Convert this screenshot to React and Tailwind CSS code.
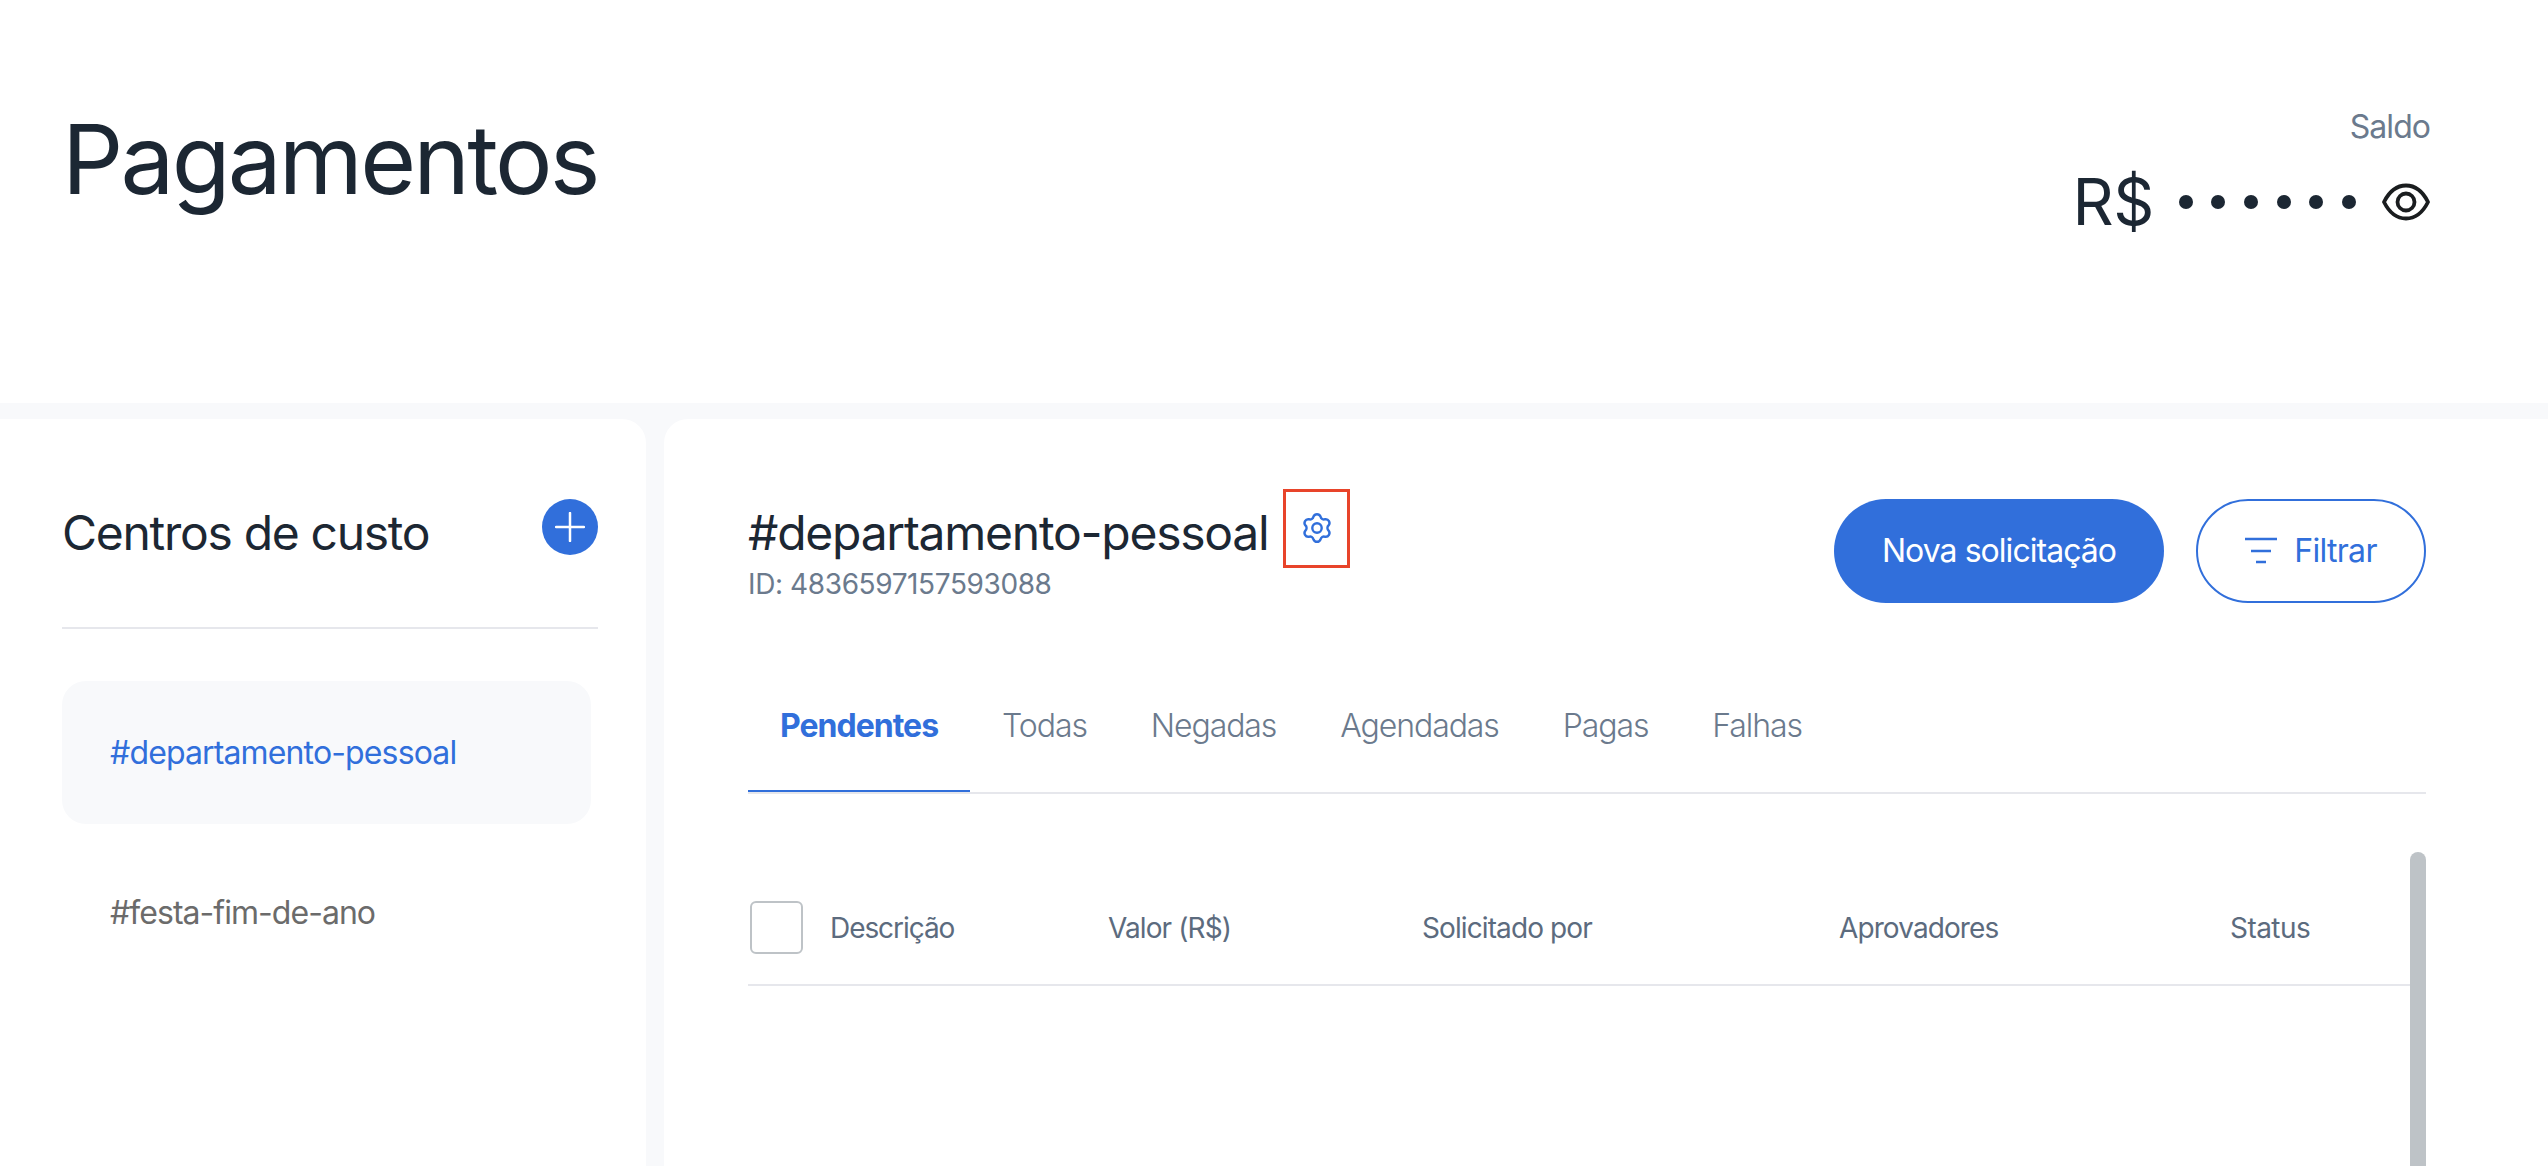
const tabs = ["Todas", "Negadas", "Agendadas", "Pagas", "Falhas"];

// six round lobes around the centre of a 32x32 box
function gearPath() {
  const pt = (deg) => {
    const r = (deg * Math.PI) / 180;
    return `${(16 + 12 * Math.cos(r)).toFixed(2)} ${(16 + 12 * Math.sin(r)).toFixed(2)}`;
  };
  let d = `M${pt(-90 - 17)}`;
  for (let i = 0; i < 6; i++) {
    const a = -90 + 60 * i;
    d += `A3.8 3.8 0 0 1 ${pt(a + 17)}A3.5 3.5 0 0 0 ${pt(a + 60 - 17)}`;
  }
  return d + "Z";
}

function EyeIcon() {
  return (
    <svg width="48" height="38" viewBox="0 0 48 38" fill="none" stroke="#1a1d1f" strokeWidth="3.8">
      <path d="M2 19C7 9 14 2.500 24 2.500S41 9 46 19C41 29 34 35.500 24 35.500S7 29 2 19Z" strokeLinejoin="round" />
      <circle cx="24" cy="19" r="8.500" />
    </svg>
  );
}

function GearIcon() {
  return (
    <svg width="32" height="32" viewBox="0 0 32 32" fill="none" stroke="#316fdb" strokeWidth="2.400" strokeLinejoin="round">
      <path d={gearPath()} />
      <circle cx="16" cy="16" r="4.700" />
    </svg>
  );
}

export default function App() {
  return (
    <div className="h-screen overflow-hidden flex flex-col bg-[#f8f9fb] font-['Inter',sans-serif] text-[#1c2733]">
      {/* Header */}
      <header className="h-[403px] shrink-0 bg-white flex justify-between pl-[62px] pr-[118px]">
        <h1 className="mt-[101px] text-[96px] leading-[116px] tracking-[-0.029em]">Pagamentos</h1>
        <div className="mt-[108px] flex flex-col items-end">
          <span className="text-[32px] leading-[38px] tracking-[-0.03em] text-[#6b7a8d]">Saldo</span>
          <div className="mt-[18px] flex items-center">
            <span className="text-[64px] leading-[76px] tracking-[-0.01em]">R$</span>
            <div className="ml-[25px] flex gap-[18.700px]">
              {[0, 1, 2, 3, 4, 5].map((i) => (
                <span key={i} className="w-[14px] h-[14px] rounded-full bg-[#1c2733]" />
              ))}
            </div>
            <div className="ml-[26px]">
              <EyeIcon />
            </div>
          </div>
        </div>
      </header>

      <div className="flex-1 min-h-0 flex gap-[18px] pt-[16px]">
        {/* Centros de custo */}
        <aside className="w-[646px] shrink-0 bg-white rounded-tr-[24px] pl-[62px] pr-[48px]">
          <div className="h-[210px] flex items-start justify-between border-b-2 border-[#e6e7ec]">
            <h2 className="mt-[85px] text-[48px] leading-[58px] tracking-[-0.027em]">Centros de custo</h2>
            <button className="mt-[80px] w-[56px] h-[56px] rounded-full bg-[#316fdb] flex items-center justify-center">
              <svg width="30" height="30" viewBox="0 0 30 30" stroke="#fff" strokeWidth="2.500" strokeLinecap="round">
                <path d="M15 1v28M1 15h28" />
              </svg>
            </button>
          </div>
          <div className="mt-[52px] w-[529px] h-[143px] rounded-[24px] bg-[#f8f9fb] flex items-center pl-[48px] text-[32px] tracking-[-0.027em] text-[#316fdb]">
            #departamento-pessoal
          </div>
          <div className="h-[143px] w-[529px] mt-[17px] flex items-center pl-[48px] text-[32px] tracking-[-0.03em] text-[#6b6b6b]">
            #festa-fim-de-ano
          </div>
        </aside>

        {/* Main */}
        <main className="flex-1 bg-white rounded-tl-[24px] pl-[84px] pr-[122px] pt-[70px]">
          <div className="flex justify-between">
            <div>
              <div className="flex items-start">
                <h2 className="mt-[15px] text-[48px] leading-[58px] tracking-[-0.026em]">#departamento-pessoal</h2>
                <div className="ml-[15px] w-[67px] h-[79px] border-[3px] border-[#e8442a] flex justify-center pt-[20px]">
                  <GearIcon />
                </div>
              </div>
              <p className="-mt-[1px] text-[28px] leading-[34px] tracking-[-0.014em] text-[#6b7a8d]">ID: 4836597157593088</p>
            </div>
            <div className="mt-[10px] flex gap-[32px]">
              <button className="w-[330px] h-[104px] rounded-full bg-[#316fdb] text-white text-[32px] tracking-[-0.03em]">
                Nova solicitação
              </button>
              <button className="w-[230px] h-[104px] rounded-full border-2 border-[#316fdb] text-[#316fdb] text-[32px] tracking-[-0.022em] flex items-center justify-center gap-[17px]">
                <svg width="32" height="28" viewBox="0 0 32 28" stroke="#316fdb" strokeWidth="2.500">
                  <path d="M0 2h32M6 14h20M11 25h10" />
                </svg>
                Filtrar
              </button>
            </div>
          </div>

          {/* Tabs */}
          <div className="mt-[50px] flex border-b-2 border-[#e6e7ec] h-[141px] text-[32px] text-[#6b7a8d]">
            <div className="px-[32px] pt-[8px] h-[139px] flex items-center border-b-2 border-[#316fdb] font-bold tracking-[-0.031em] text-[#316fdb]">
              Pendentes
            </div>
            {tabs.map((t) => (
              <div key={t} className="px-[32px] pt-[6px] h-[139px] flex items-center font-light tracking-[-0.034em]">{t}</div>
            ))}
          </div>

          {/* Table */}
          <div className="mt-[58px] h-[400px] flex">
            <div className="flex-1">
              <div className="mt-[49px] pb-[30px] flex items-center border-b-2 border-[#e6e7ec] text-[28px] tracking-[-0.032em] text-[#5c6b7e]">
                <span className="ml-[2px] w-[53px] h-[53px] rounded-[6px] border-2 border-[#bec3c7]" />
                <span className="ml-[27px] w-[278px] tracking-[-0.038em]">Descrição</span>
                <span className="w-[314px]">Valor (R$)</span>
                <span className="w-[417px]">Solicitado por</span>
                <span className="w-[391px]">Aprovadores</span>
                <span className="tracking-[-0.02em]">Status</span>
              </div>
            </div>
            <div className="w-[16px] rounded-t-full bg-[#bec3c7]" />
          </div>
        </main>
      </div>
    </div>
  );
}
